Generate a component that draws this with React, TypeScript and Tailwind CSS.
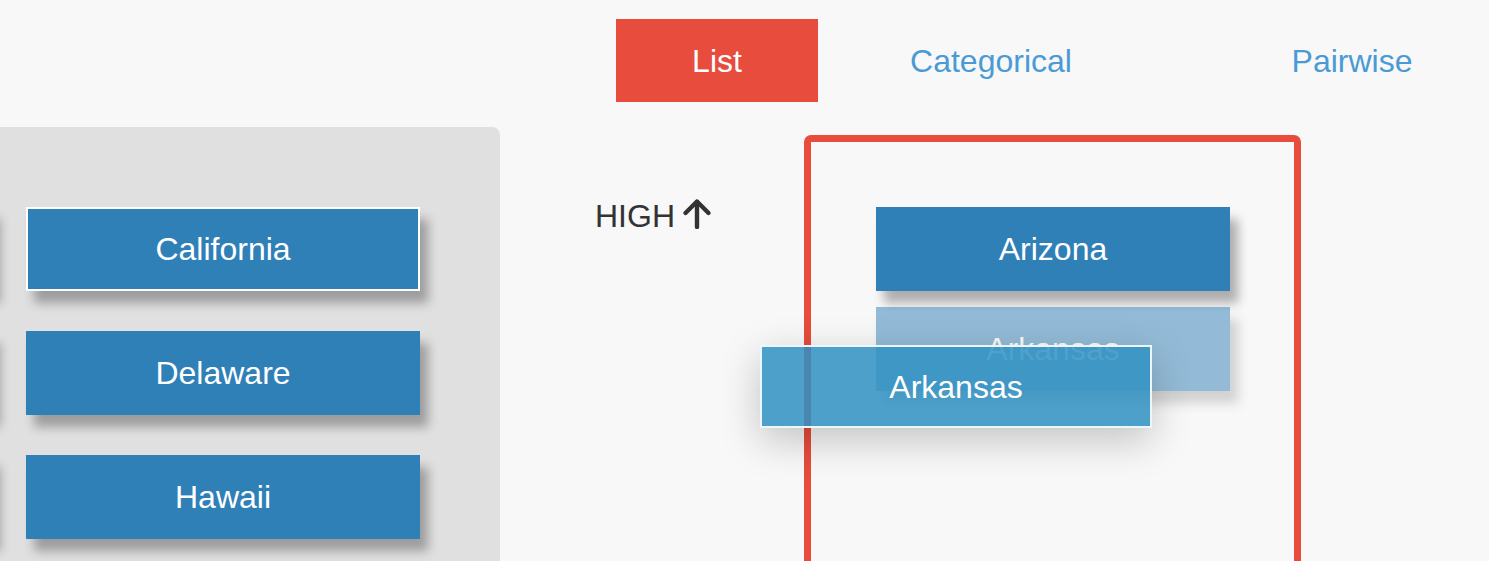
const cardBase =
  "flex h-[84px] items-center justify-center border-2 text-[32px] text-white shadow-[8px_12px_10px_rgba(0,0,0,0.3)]";

function Card({ label, selected = false, width = "w-[394px]" }: { label?: string; selected?: boolean; width?: string }) {
  return (
    <div
      className={`${cardBase} ${width} shrink-0 bg-[#3080b8] ${
        selected ? "border-white" : "border-[#3080b8]"
      }`}
    >
      {label}
    </div>
  );
}

function ArrowUpBold() {
  return (
    <svg width="30" height="31" viewBox="0 0 30 31" fill="none" stroke="#333" strokeWidth="4.4" strokeLinecap="round" strokeLinejoin="round">
      <path d="M15 29V4" />
      <path d="M3.5 15 15 3.5 26.5 15" />
    </svg>
  );
}

export default function App() {
  return (
    <div className="relative h-[561px] overflow-hidden bg-[#f8f8f8] font-['Liberation_Sans',Arial,sans-serif]">
      {/* Mode tabs */}
      <nav className="flex pl-[616px] pt-[19px] text-[32px]">
        <div className="flex h-[83px] w-[202px] shrink-0 items-center justify-center bg-[#e74c3c] text-white">List</div>
        <div className="flex h-[83px] w-[346px] shrink-0 items-center justify-center text-[#4a9bd5]">Categorical</div>
        <div className="flex h-[83px] w-[376px] shrink-0 items-center justify-center text-[#4a9bd5]">Pairwise</div>
      </nav>

      <div className="mt-[25px] flex">
        {/* Unsorted pool, scrolled so the first column is off screen */}
        <div className="ml-[-440px] flex h-[520px] w-[940px] shrink-0 gap-[34px] rounded-tr-lg bg-[#e0e0e0] pl-[38px] pt-[80px]">
          <div className="flex flex-col gap-[40px]" aria-hidden="true">
            <Card />
            <Card />
            <Card />
          </div>
          <div className="flex flex-col gap-[40px]">
            <Card label="California" selected />
            <Card label="Delaware" />
            <Card label="Hawaii" />
          </div>
        </div>

        {/* Ranked list */}
        <div className="flex">
          <div className="ml-[95px] mt-[73px] flex w-[209px] shrink-0 items-start gap-[7px] text-[32px] leading-[32px] text-[#333]">
            <span>HIGH</span>
            <span className="-mt-[2px]">
              <ArrowUpBold />
            </span>
          </div>
          <div className="mt-[8px] h-[520px] w-[497px] shrink-0 rounded-[7px] border-[7px] border-[#e74c3c] pl-[65px] pt-[65px]">
            <div className="flex flex-col gap-[16px]">
              <Card label="Arizona" width="w-[354px]" />
              <div className="opacity-50">
                <Card label="Arkansas" width="w-[354px]" />
              </div>
            </div>
          </div>
        </div>
      </div>

      {/* Card being dragged */}
      <div className="absolute left-[760px] top-[345px] flex h-[83px] w-[392px] items-center justify-center border-2 border-white/90 bg-[#2f90c2]/85 text-[32px] text-white shadow-[0_12px_40px_rgba(0,0,0,0.22)]">
        Arkansas
      </div>
    </div>
  );
}
